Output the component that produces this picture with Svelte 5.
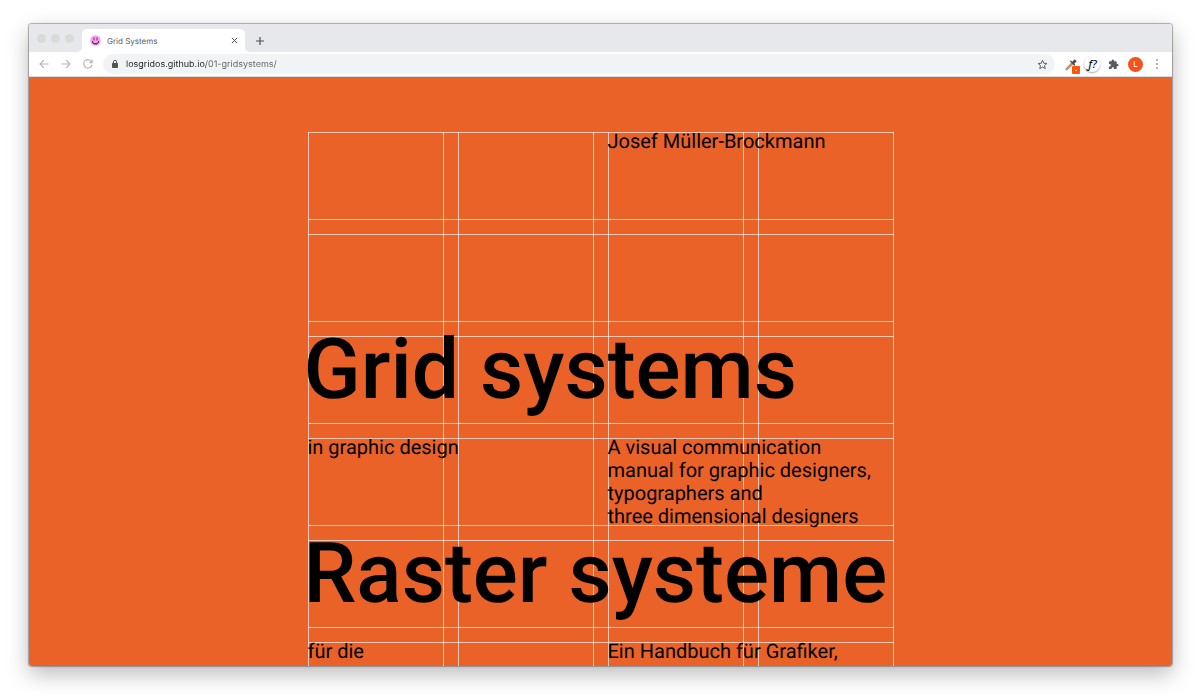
<script>
  let address = $state('losgridos.github.io/01-gridsystems/');
</script>

<main class="desktop">
  <section class="window" aria-label="Browser window">
    <header class="tabstrip">
      <div class="lights" aria-hidden="true"><i></i><i></i><i></i></div>
      <div class="tab">
        <svg class="favicon" viewBox="0 0 22 22" aria-hidden="true">
          <circle cx="11" cy="11" r="10.5" fill="#f0a3ec" />
          <path d="M7 5h2v6H7zM13 5h2v6h-2z" fill="#7a2672" />
          <path d="M4 12h2v3h2v1h6v-1h2v-3h2v4h-2v2h-2v1H8v-1H6v-2H4z" fill="#7a2672" />
        </svg>
        <span class="tab-title">Grid Systems</span>
        <button class="close" aria-label="Close tab">
          <svg viewBox="0 0 8 8"><path d="M1 1l6 6M7 1L1 7" /></svg>
        </button>
      </div>
      <button class="new-tab" aria-label="New tab">
        <svg viewBox="0 0 10 10"><path d="M5 1v8M1 5h8" /></svg>
      </button>
    </header>

    <nav class="toolbar" aria-label="Browser toolbar">
      <button class="nav" aria-label="Back">
        <svg viewBox="0 0 10 10"><path d="M9.5 5H1M5 1L1 5l4 4" /></svg>
      </button>
      <button class="nav" aria-label="Forward">
        <svg viewBox="0 0 10 10"><path d="M.5 5H9M5 1l4 4-4 4" /></svg>
      </button>
      <button class="nav" aria-label="Reload">
        <svg viewBox="0 0 10 10"><path d="M8.6 2.8A4.2 4.2 0 1 0 9 6" /><path class="solid" d="M9.7.2v4H5.7z" /></svg>
      </button>

      <div class="omnibox">
        <svg class="lock" viewBox="0 0 8 10" aria-hidden="true">
          <rect x="1" y="4" width="6" height="5" rx=".7" fill="#505357" />
          <path d="M2.400 4.300V2.900a1.600 1.600 0 0 1 3.200 0v1.400" fill="none" stroke="#505357" stroke-width="1" />
        </svg>
        <input type="text" aria-label="Address" bind:value={address} spellcheck="false" />
        <button class="star" aria-label="Bookmark this page">
          <svg viewBox="0 0 24 24"><path d="M12 2.800l2.700 6.400 6.900.6-5.200 4.500 1.600 6.700-6-3.600L6 21l1.600-6.700-5.200-4.500 6.900-.6z" /></svg>
        </button>
      </div>

      <div class="extensions">
        <button class="picker" aria-label="Colour picker">
          <svg viewBox="0 0 15 16">
            <path d="M1.300 10.300L6.500 4.800l1.500 1.500-5.300 5.300-1.800.4z" fill="#e08a5b" stroke="#888" stroke-width=".7" />
            <path d="M5.800 3.300l3.700 3.700M7.300 4.800l2.400-2.600 1 1-2.500 2.500z" stroke="#4a4a4a" stroke-width="1.400" stroke-linecap="round" fill="#4a4a4a" />
            <rect x="7" y="8" width="8" height="8" rx="1" fill="#ff5505" />
            <rect x="10" y="12" width="2" height="1" fill="#ffc5a5" />
          </svg>
        </button>
        <button class="whatfont" aria-label="Identify font">ƒ?</button>
        <button class="puzzle" aria-label="Extensions">
          <svg viewBox="0 0 24 24"><path d="M20.500 11H19V7a2 2 0 0 0-2-2h-4V3.500a2.500 2.500 0 0 0-5 0V5H4a2 2 0 0 0-2 2v3.800h1.500a2.700 2.700 0 0 1 0 5.400H2V20a2 2 0 0 0 2 2h3.800v-1.500a2.700 2.700 0 0 1 5.400 0V22H17a2 2 0 0 0 2-2v-4h1.500a2.500 2.500 0 0 0 0-5z" fill="#585c61" /></svg>
        </button>
        <button class="avatar" aria-label="Profile">L</button>
        <button class="more" aria-label="Menu">
          <svg viewBox="0 0 4 12"><circle cx="2" cy="2" r="1" /><circle cx="2" cy="6" r="1" /><circle cx="2" cy="10" r="1" /></svg>
        </button>
      </div>
    </nav>

    <article class="page">
      <div class="poster">
        <p class="right">Josef Müller-Brockmann</p>
        <h1 class="row-3">Grid systems</h1>
        <p class="left row-4">in graphic design</p>
        <p class="right row-4">
          A visual communication<br />manual for graphic designers,<br />typographers and<br />three dimensional designers
        </p>
        <h1 class="row-5">Raster systeme</h1>
        <p class="left row-6">für die</p>
        <p class="right row-6">Ein Handbuch für Grafiker,</p>
      </div>
    </article>
  </section>
</main>

<style>
  :global(body) {
    margin: 0;
    background: #fff;
  }

  .desktop {
    box-sizing: border-box;
    height: 100vh;
    padding: 24px 28px 34px 29px;
    overflow: hidden;
    font-family: Inter, sans-serif;
    text-rendering: geometricPrecision;
  }

  .window {
    display: flex;
    flex-direction: column;
    height: 100%;
    overflow: hidden;
    border-radius: 3px;
    background: #fff;
    box-shadow:
      0 0 1px 1px rgba(0, 0, 0, 0.3),
      0 8px 22px rgba(0, 0, 0, 0.28);
  }

  button {
    display: flex;
    flex: none;
    align-items: center;
    justify-content: center;
    padding: 0;
    border: 0;
    background: none;
    font-family: inherit;
  }

  svg {
    display: block;
    overflow: visible;
  }

  .tabstrip {
    display: flex;
    flex: none;
    align-items: flex-end;
    height: 28px;
    background: #e7e8ec;
  }

  .lights {
    display: flex;
    gap: 5px;
    align-self: center;
    padding: 0 8px;
  }

  .lights i {
    width: 9px;
    height: 9px;
    border-radius: 50%;
    background: #dadada;
  }

  .tab {
    position: relative;
    display: flex;
    align-items: center;
    box-sizing: border-box;
    width: 163px;
    height: 23px;
    padding: 0 6px 0 8px;
    border-radius: 5px 5px 0 0;
    background: #fff;
  }

  .tab::before,
  .tab::after {
    content: '';
    position: absolute;
    bottom: 0;
    width: 5px;
    height: 5px;
  }

  .tab::before {
    right: 100%;
    background: radial-gradient(circle at 0 0, transparent 5px, #fff 5px);
  }

  .tab::after {
    left: 100%;
    background: radial-gradient(circle at 100% 0, transparent 5px, #fff 5px);
  }

  .favicon {
    width: 11px;
    height: 11px;
  }

  .tab-title {
    flex: 1;
    margin-left: 6px;
    color: #5c5f63;
    font-size: 8px;
    line-height: 12px;
  }

  .close {
    width: 10px;
    height: 10px;
  }

  .close svg {
    width: 7px;
    height: 7px;
    fill: none;
    stroke: #505357;
    stroke-width: 1.1;
  }

  .new-tab {
    width: 20px;
    height: 23px;
    margin-left: 5px;
  }

  .new-tab svg {
    width: 10px;
    height: 10px;
    fill: none;
    stroke: #505357;
    stroke-width: 1.2;
  }

  .toolbar {
    display: flex;
    flex: none;
    align-items: center;
    height: 24px;
    padding: 0 13px 0 10px;
    border-bottom: 1px solid #d9dadc;
  }

  .nav {
    width: 10px;
    height: 20px;
    margin-right: 12px;
  }

  .nav svg {
    width: 10px;
    height: 10px;
    fill: none;
    stroke: #b4b6b9;
    stroke-width: 1.1;
  }

  .nav .solid {
    fill: #b4b6b9;
    stroke: none;
  }

  .omnibox {
    display: flex;
    flex: 1;
    align-items: center;
    height: 20px;
    margin-left: -2px;
    padding: 0 7px 0 8px;
    border-radius: 10px;
    background: #f1f3f4;
  }

  .lock {
    width: 8px;
    height: 10px;
  }

  .omnibox input {
    flex: 1;
    min-width: 0;
    height: 14px;
    margin: 2px 0 0 7px;
    padding: 0;
    border: 0;
    outline: 0;
    background: linear-gradient(90deg, #202124 80px, #5f6368 80px);
    background-clip: text;
    color: transparent;
    caret-color: #202124;
    font: 9px/14px Inter, sans-serif;
    text-rendering: inherit;
  }

  .star svg {
    width: 11px;
    height: 11px;
    fill: none;
    stroke: #505357;
    stroke-width: 2;
  }

  .extensions {
    display: flex;
    align-items: center;
    margin-left: 10px;
  }

  .picker svg {
    width: 15px;
    height: 16px;
  }

  .picker {
    margin-top: 3px;
  }

  .whatfont {
    width: 16px;
    height: 16px;
    margin-left: 4px;
    border-radius: 50%;
    background: #fff;
    box-shadow: 0 1px 2px rgba(0, 0, 0, 0.35);
    color: #111;
    font: italic 500 11px/16px "Noto Sans", sans-serif;
  }

  .puzzle {
    margin-left: 8px;
  }

  .puzzle svg {
    width: 11px;
    height: 11px;
  }

  .avatar {
    width: 15px;
    height: 15px;
    margin-left: 9px;
    border-radius: 50%;
    background: #f4511e;
    color: #fff;
    font-size: 8px;
    line-height: 15px;
  }

  .more {
    margin-left: 12px;
  }

  .more svg {
    width: 4px;
    height: 12px;
    fill: #999b9f;
  }

  .page {
    flex: 1;
    min-height: 0;
    padding-top: 55px;
    overflow: hidden;
    background: #ea6228;
    color: #000;
    font-family: Roboto, sans-serif;
  }

  .poster {
    --line: rgba(255, 255, 255, 0.65);
    display: grid;
    grid-template-columns: repeat(4, 136px);
    grid-template-rows: repeat(8, 88px);
    gap: 14px;
    width: max-content;
    margin: 0 auto;
    background:
      repeating-linear-gradient(90deg, var(--line) 0 1px, transparent 1px 135px, var(--line) 135px 136px, transparent 136px 150px),
      repeating-linear-gradient(var(--line) 0 1px, transparent 1px 87px, var(--line) 87px 88px, transparent 88px 102px);
  }

  p,
  h1 {
    margin: 0;
    white-space: nowrap;
  }

  p {
    margin-top: -2px;
    font-size: 20px;
    line-height: 23px;
  }

  h1 {
    grid-column: 1 / -1;
    margin-left: -4px;
    font-size: 84px;
    font-weight: 500;
    line-height: 68px;
  }

  .left {
    grid-column: 1 / 3;
  }

  .right {
    grid-column: 3 / 5;
  }

  .row-3 {
    grid-row: 3;
  }

  .row-4 {
    grid-row: 4;
  }

  .row-5 {
    grid-row: 5;
  }

  .row-6 {
    grid-row: 6;
  }
</style>
